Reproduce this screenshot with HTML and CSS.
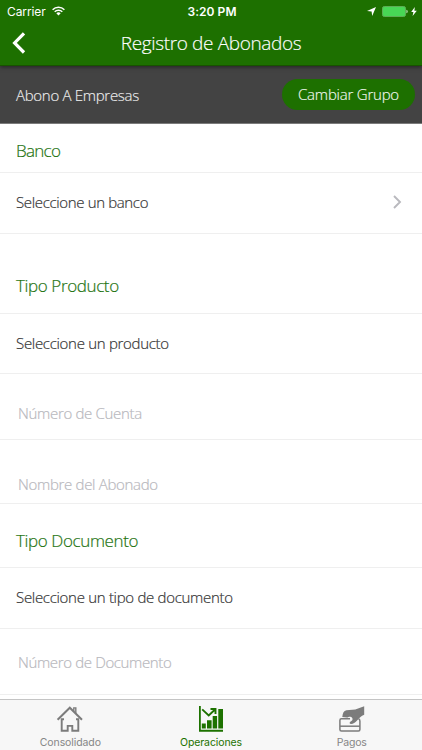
FILE: index.html
```html
<!DOCTYPE html>
<html lang="es">
<head>
<meta charset="utf-8">
<title>Registro de Abonados</title>
<link rel="stylesheet" href="styles.css">
</head>
<body>
<div class="screen">
  <header class="header">
    <div class="status">
      <div class="status-left">
        <span class="carrier">Carrier</span>
        <svg class="wifi" width="13" height="10" viewBox="0 0 13 10"><g fill="none" stroke="#fff" stroke-width="1.5"><path d="M.6 3.7a8.4 8.4 0 0 1 11.8 0"/><path d="M2.7 5.8a5.4 5.4 0 0 1 7.6 0"/></g><path d="M4.3 7.3a3.2 3.2 0 0 1 4.4 0L6.5 9.6z" fill="#fff"/></svg>
      </div>
      <span class="clock">3:20 PM</span>
      <div class="status-right">
        <svg class="location" width="9" height="9" viewBox="0 0 8 8"><path d="M8 0 4.6 8 4.1 4 0 3.5z" fill="#fff"/></svg>
        <svg class="battery" width="26" height="11" viewBox="0 0 26 11"><rect x=".5" y=".5" width="23" height="10" rx="1.8" fill="#48d755" stroke="#5eae55"/><path d="M24.3 3.7q1.5.2 1.5 1.8t-1.5 1.8z" fill="#a5d3a0"/></svg>
        <svg class="bolt" width="6" height="9" viewBox="0 0 6 9"><path d="M3.8 0 .2 5h2.2L1.6 9 5.8 3.8H3.4z" fill="#fff"/></svg>
      </div>
    </div>
    <div class="nav">
      <svg class="back" width="14" height="22" viewBox="0 0 14 22"><path d="M12 1.3 2.6 11 12 20.5" fill="none" stroke="#fff" stroke-width="3.2"/></svg>
      <h1 class="title">Registro de Abonados</h1>
    </div>
  </header>
  <div class="group">
    <span class="group-name">Abono A Empresas</span>
    <button class="group-button"><span class="group-button-text">Cambiar Grupo</span></button>
  </div>
  <main class="form">
    <h2 class="row heading banco">Banco</h2>
    <div class="row select pick-bank"><span>Seleccione un banco</span>
      <svg class="chevron" width="9" height="14" viewBox="0 0 9 14"><path d="M1 1l6 6-6 6" fill="none" stroke="#b9b9be" stroke-width="1.9"/></svg>
    </div>
    <h2 class="row heading product">Tipo Producto</h2>
    <div class="row select pick-product">Seleccione un producto</div>
    <div class="row field account">Número de Cuenta</div>
    <div class="row field holder">Nombre del Abonado</div>
    <h2 class="row heading document">Tipo Documento</h2>
    <div class="row select pick-document">Seleccione un tipo de documento</div>
    <div class="row field number">Número de Documento</div>
  </main>
  <nav class="tabs">
    <div class="tab">
      <svg width="28" height="28" viewBox="0 0 28 28"><g fill="none" stroke="#7c7c7c" stroke-width="2"><path d="M1.6 14.8 13.8 2.7 26 14.8"/><path d="M17.8 6V2.9h2v5.6" stroke-width="1.4"/><path d="M8 14.2H5.7v11.5h6v-4.8h4.6v4.8h6V14.2H20" stroke-width="1.9"/></g></svg>
      <span class="label home">Consolidado</span>
    </div>
    <div class="tab active">
      <svg width="28" height="28" viewBox="0 0 28 28"><g fill="#1d7200"><path d="M2 1h1.8v23.8H26v1.9H2z"/><path d="M4.8 18.6h4v4.9h-4zM10 15.3h4.6v8.2H10zM15.7 11h4.4v12.5h-4.4zM21.3 4H26v19.5h-4.7z"/></g><path d="M5.2 4.4 11.7 10.4 17.8 4.8M13.5 4h5v5" fill="none" stroke="#1d7200" stroke-width="1.9"/></svg>
      <span class="label operations">Operaciones</span>
    </div>
    <div class="tab">
      <svg width="28" height="28" viewBox="0 0 28 28"><g fill="none" stroke="#7c7c7c" stroke-width="1.5"><path d="M12 13.8H3.4Q1.9 13.8 1.9 15.3v9.3q0 1.5 1.5 1.5h17q1.5 0 1.5-1.5V16q0-1.8-1.5-2.2"/><path d="M2 21.2h20"/></g><path d="M4.3 12.1C4.6 8 5.8 5.6 8.4 5.2l8.9-.8L26.2 1.2v8.6c-3.2 1.1-4.3 2.7-7.1 5.8-2 2.1-3.8 3.4-6 3.4-1.6 0-2-1.3-.8-2.2l1.8-1.4c1-1.2.4-3-1.1-3.5-1.5-.5-2.8.5-4.2.7z" fill="#7c7c7c"/></svg>
      <span class="label payments">Pagos</span>
    </div>
  </nav>
</div>
</body>
</html>
```
FILE: styles.css
```css
* { box-sizing: border-box; }
body { margin: 0; background: #fff; font-family: "Open Sans", "Noto Sans", sans-serif; font-weight: 300; }
h1, h2 { margin: 0; font-weight: 300; }
svg { display: block; flex: none; }
.screen { width: 422px; height: 750px; display: flex; flex-direction: column; overflow: hidden; white-space: nowrap; }
.header { height: 66px; flex: none; background: #1d7000; color: #fff; border-bottom: 1px solid #185300; box-shadow: 0 1px 4px rgba(0,0,0,.5); z-index: 1; }
.status { height: 22px; display: grid; grid-template-columns: 1fr auto 1fr; align-items: center; padding: 0 5px 0 7px; font-family: Inter, sans-serif; font-size: 12px; font-weight: 400; }
.status-left, .status-right { display: flex; align-items: center; }
.carrier { letter-spacing: -.1px; }
.wifi { margin-left: 6px; }
.clock { font-weight: 600; font-size: 12px; letter-spacing: .05px; }
.status-right { justify-content: flex-end; }
.battery { margin-left: 6px; }
.bolt { margin-left: 3px; }
.nav { height: 43px; display: grid; grid-template-columns: 28px 1fr 28px; align-items: center; padding-bottom: 1px; }
.back { margin-left: 12px; }
.title { text-align: center; font-size: 19px; line-height: 26px; letter-spacing: -.36px; -webkit-text-stroke: .15px; }
.group { height: 58px; flex: none; background: #434343; border-bottom: 1px solid #7b7b7b; display: flex; justify-content: space-between; align-items: center; padding: 0 7px 0 16px; color: #eee; font-size: 15px; letter-spacing: -.3px; -webkit-text-stroke: .15px; }
.group-button { width: 133px; height: 31px; border: 0; border-radius: 16px; padding: 0 0 1px; background: #1d7000; color: #f2f8f0; font: inherit; letter-spacing: -.22px; }
.form { flex: 1; min-height: 0; }
.row { display: flex; align-items: center; padding: 0 20px 2px 16px; border-bottom: 1px solid #efefef; -webkit-text-stroke: .2px; }
.heading { color: #1f7412; font-size: 17px; letter-spacing: -.38px; }
.select { color: #363636; font-size: 15px; letter-spacing: -.3px; justify-content: space-between; }
.field { color: #b8b8bd; font-size: 15px; letter-spacing: -.32px; padding-left: 18px; }
.banco { height: 49px; padding-top: 6px; letter-spacing: -.7px; }
.pick-bank { height: 61px; letter-spacing: -.35px; }
.product { height: 80px; padding-top: 26px; }
.pick-product { height: 60px; }
.account { height: 66px; padding-top: 14px; }
.holder { height: 64px; padding-top: 26px; }
.document { height: 64px; padding-top: 11px; }
.pick-document { height: 61px; }
.number { height: 66px; padding-top: 2px; letter-spacing: -.36px; }
.tabs { height: 51px; flex: none; display: grid; grid-template-columns: repeat(3, 1fr); background: #f7f7f7; border-top: 1px solid #c4c4c4; }
.tab { display: flex; flex-direction: column; align-items: center; padding-top: 5px; color: #868686; font-family: Inter, sans-serif; font-size: 10.5px; font-weight: 400; line-height: 15px; }
.active { color: #1d7200; }
.label { margin-top: 2px; }
.home, .operations { letter-spacing: -.1px; }
.payments { letter-spacing: -.2px; }
```
